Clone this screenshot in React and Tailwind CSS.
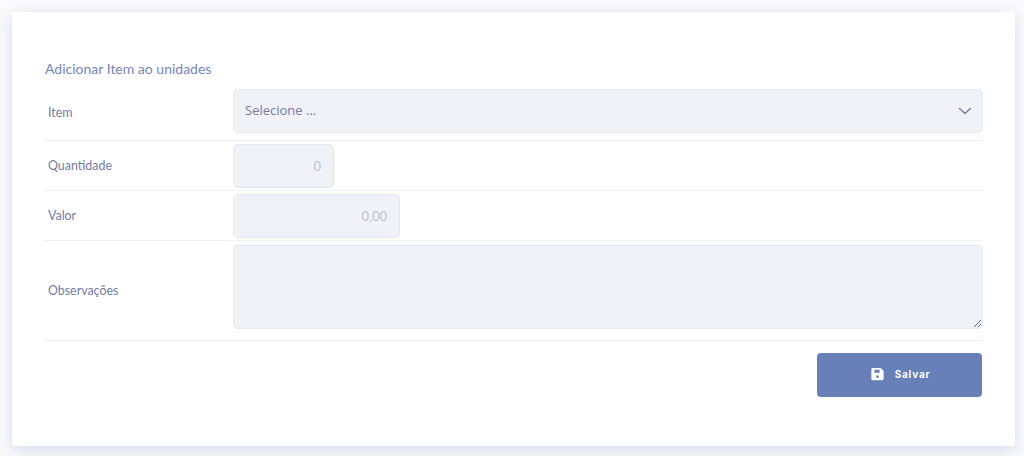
import React from "react";

const labelClass = "w-[189px] pl-[4px] shrink-0 text-[12.4px] text-[#737ca3] font-['Lato',sans-serif]";
const fieldClass = "h-[44px] bg-[#f1f2f7] border border-[#e4e6f0] rounded-[5px] text-[13px] outline-none";

const Row = ({ label, className = "", labelOffset = "", children }) => (
  <div className={`flex items-center border-b border-[#f0f1f6] ${className}`}>
    <label className={`${labelClass} ${labelOffset}`}>{label}</label>
    {children}
  </div>
);

export default function App() {
  return (
    <div className="w-[1024px] h-[456px] overflow-hidden bg-[#fbfbfd] pt-[12px] px-[12px] font-['Lato',sans-serif]">
      <div className="w-[1003px] h-[434px] bg-white rounded-[4px] pt-[48px] pl-[32px] pr-[32px] shadow-[0_4px_16px_rgba(180,186,215,0.5)]">
        <h3 className="h-[29px] pl-px text-[14px] leading-[17px] text-[#7686b8] font-normal">
          Adicionar Item ao unidades
        </h3>

        <Row label="Item" className="h-[52px] pb-[7px]" labelOffset="pt-[4px]">
          <div className={`${fieldClass} flex-1 flex items-center justify-between pl-[11px] pr-[10px] text-[#737ca3] font-['Open_Sans',sans-serif]`}>
            <span>Selecione ...</span>
            <svg width="14" height="8" viewBox="0 0 14 8" fill="none" stroke="#737ca3" strokeWidth="1.4" strokeLinecap="round" strokeLinejoin="round">
              <path d="M1.500 1.500 7 6.500l5.500-5" />
            </svg>
          </div>
        </Row>

        <Row label="Quantidade" className="h-[50px] pt-[3px] pb-[2px]">
          <input readOnly value="0" className={`${fieldClass} w-[101px] text-right pr-[12px] text-[#bcc1d2]`} />
        </Row>

        <Row label="Valor" className="h-[50px] pt-[3px] pb-[2px]">
          <input readOnly value="0,00" className={`${fieldClass} w-[167px] text-right pr-[12px] text-[#bcc1d2]`} />
        </Row>

        <Row label="Observações" className="h-[100px] pt-[4px] pb-[11px]" labelOffset="pt-[8px]">
          <textarea readOnly className={`${fieldClass} flex-1 !h-[84px] block resize-y`} />
        </Row>

        <div className="flex justify-end pt-[12px] pr-px">
          <button className="w-[165px] h-[44px] pb-[2px] pl-[2px] bg-[#6780b8] rounded-[4px] flex items-center justify-center gap-[11px] text-white text-[10px] font-bold tracking-[0.8px] font-['Inter',sans-serif]">
            <svg width="13" height="14" viewBox="0 0 448 512" fill="#fff">
              <path d="M433.941 129.941l-83.882-83.882A48 48 0 0 0 316.118 32H48C21.490 32 0 53.490 0 80v352c0 26.510 21.490 48 48 48h352c26.510 0 48-21.490 48-48V163.882a48 48 0 0 0-14.059-33.941zM224 400c-26.500 0-48-21.500-48-48s21.500-48 48-48 48 21.500 48 48-21.500 48-48 48zm80-288v88c0 6.627-5.373 12-12 12H120c-6.627 0-12-5.373-12-12v-88c0-6.627 5.373-12 12-12h172c6.627 0 12 5.373 12 12z" />
            </svg>
            Salvar
          </button>
        </div>
      </div>
    </div>
  );
}
